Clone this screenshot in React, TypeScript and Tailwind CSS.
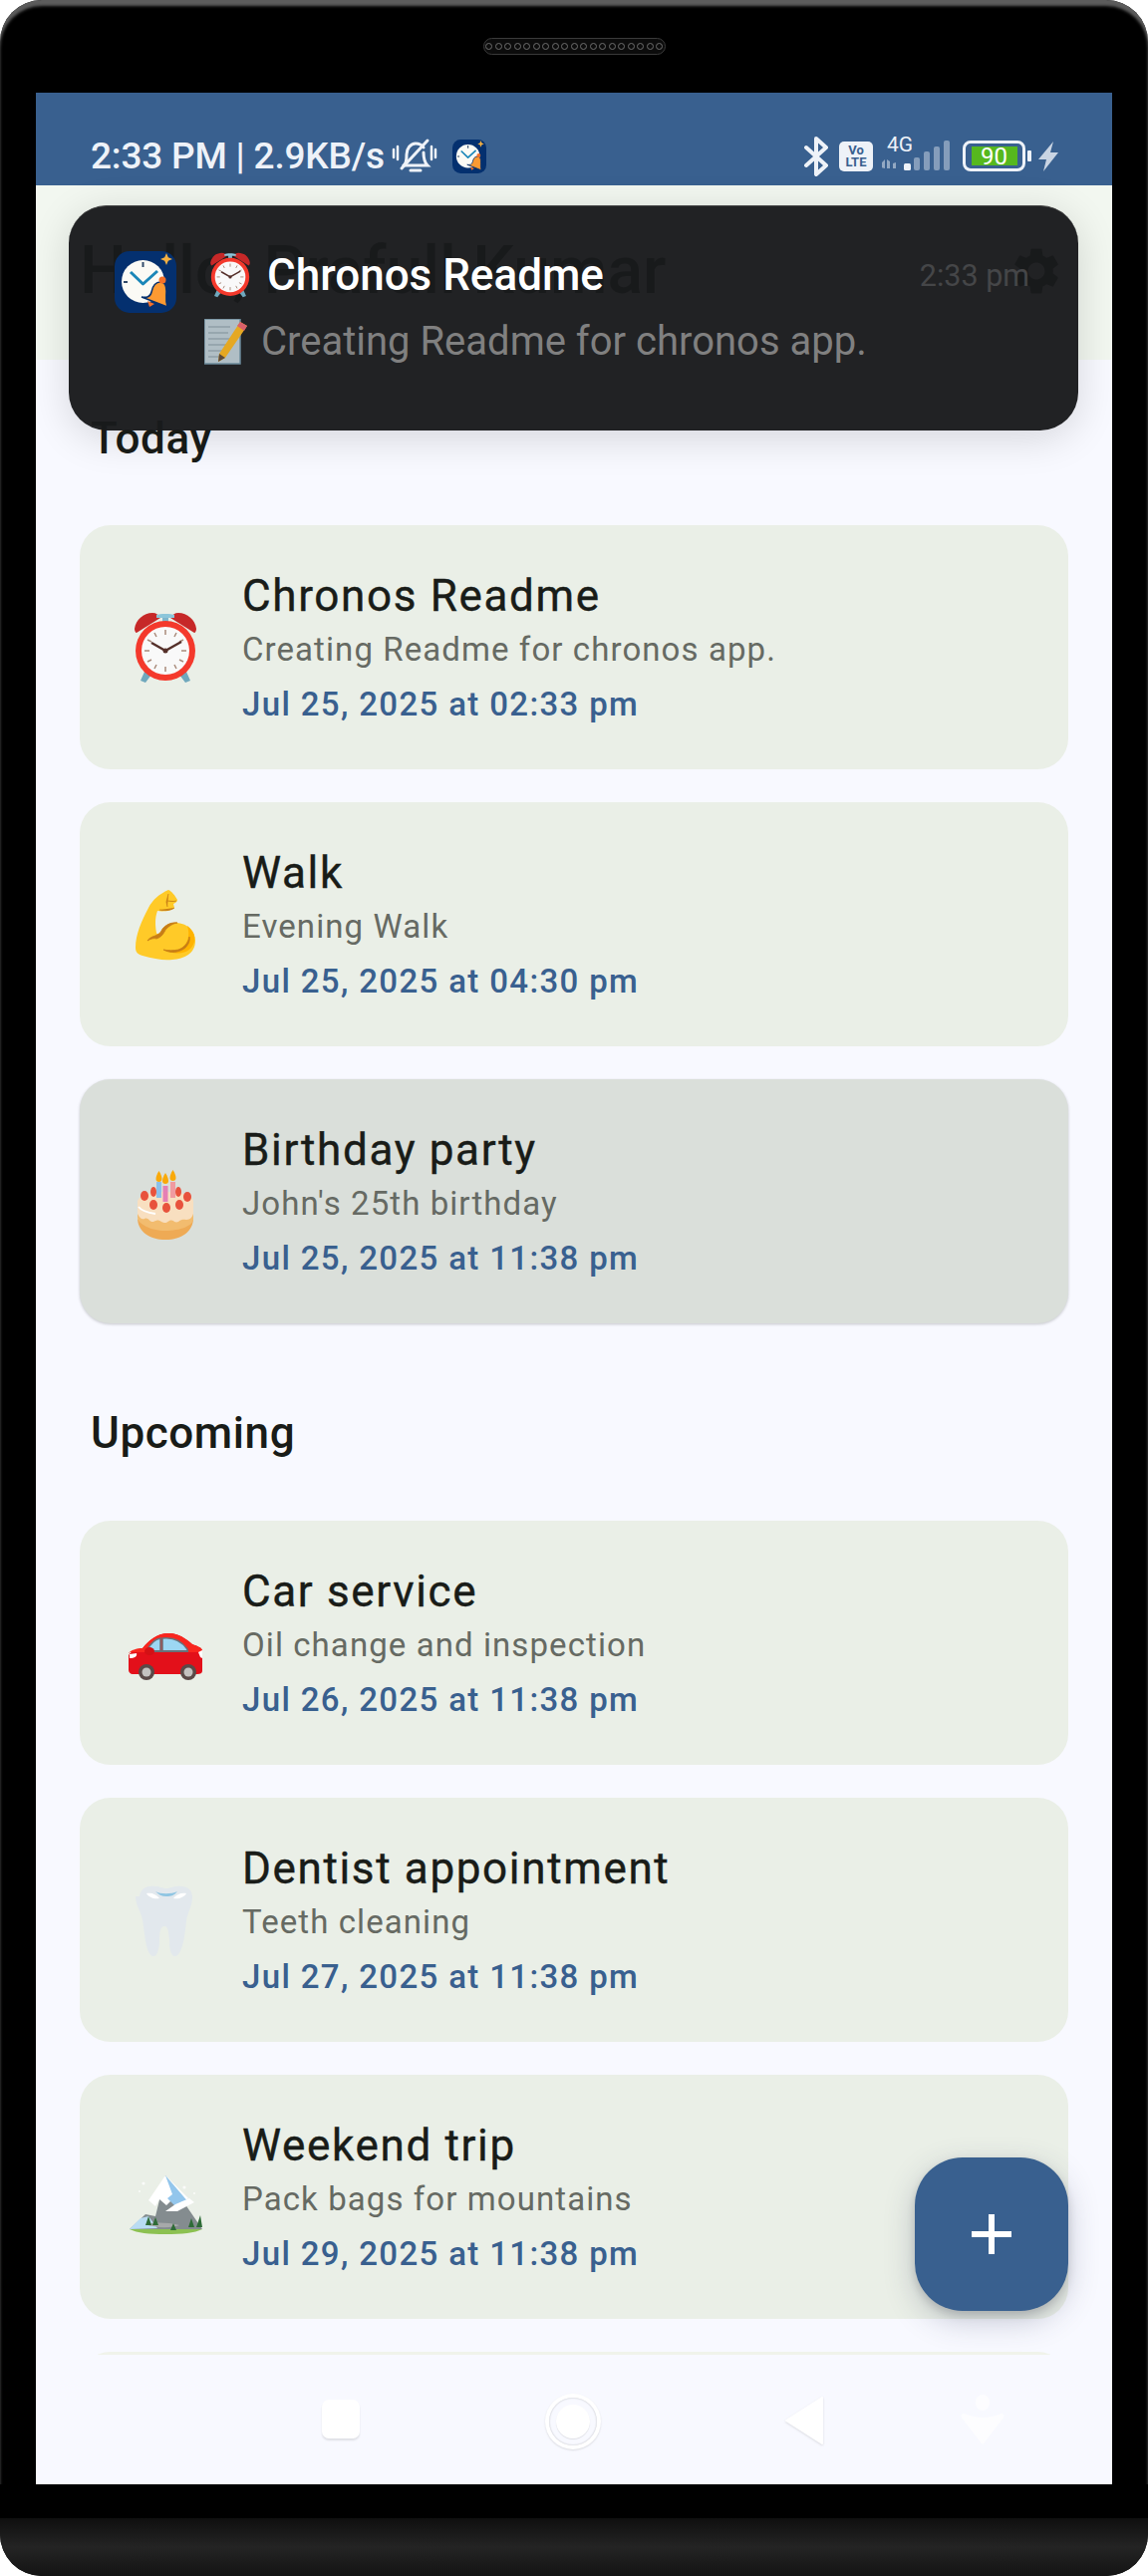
import React from "react";
import { MdSettings } from "react-icons/md";

const AlarmEmoji = ({ s = 72 }: { s?: number }) => (
  <svg width={s} height={s} viewBox="0 0 72 72" className="overflow-visible">
    <path d="M5 17C6 8 14 1 23 1c4 0 6 2 8 5L7 21c-1 0-2-2-2-4Z" fill="#c62828" />
    <path d="M67 17C66 8 58 1 49 1c-4 0-6 2-8 5l24 15c1 0 2-2 2-4Z" fill="#c62828" />
    <path d="M33 5h6v7h-6z" fill="#7fb6cc" />
    <path d="M27 3c3-1.500 15-1.500 18 0v3H27z" fill="#8cc6da" />
    <path d="M15 60l-4 9 5 2 6-8zM57 60l4 9-5 2-6-8z" fill="#6fa8bd" />
    <circle cx="36" cy="39" r="30" fill="#f4392c" />
    <circle cx="36" cy="39" r="24" fill="#f9f9f9" />
    <g stroke="#a98b7b" strokeWidth="1.500">
      <path d="M36 18v5M36 55v5M15 39h5M52 39h5M25 21l2 4M47 21l-2 4M25 57l2-4M47 57l-2-4M18 28l4 2M54 28l-4 2M18 50l4-2M54 50l-4-2" />
    </g>
    <path d="M22 31l14 8 16-9" fill="none" stroke="#55302a" strokeWidth="2.500" strokeLinejoin="round" />
    <circle cx="36" cy="39" r="2.500" fill="#55302a" />
  </svg>
);

const BicepsEmoji = () => (
  <svg width="72" height="72" viewBox="0 0 72 72" className="overflow-visible">
    <path d="M39 1C30 5 23 11 19 19 12 32 6 46 6 59c0 5 3 7 7 8 11 3 21 5 30 4 12-1 23-6 23-19 0-10-8-17-18-18-8-1-14 4-16 8-1 3-5 4-5 2-1-6-2-14 1-22 6 1 14 0 17-3l-1-4c3-1 4-3 4-4-2-4-6-9-9-10Z" fill="#ffca28" />
    <path d="M58 37c3 9 1 20-9 24-6 2-12 1-15 0 9 5 22 5 28-2 5-6 5-15-4-22Z" fill="#ffb300" />
    <path d="M48 34c-8-1-14 4-16 8-1 3-6 5-9 6-2 1-4 2-5 4 3-2 7-3 9-2 3-1 6-3 8-7 2-4 7-8 13-9ZM34 61c7 4 16 3 22-2 3-3 5-7 4-11-1 6-5 11-11 13-5 1-10 1-15 0ZM37 12c3 0 7 1 10 0M39 5l-2 8 1 5M30 21c5 1 11 1 15-2" fill="#c77d16" stroke="#c77d16" strokeWidth="0.800" />
  </svg>
);

const CakeEmoji = () => (
  <svg width="72" height="72" viewBox="0 0 72 72" className="overflow-visible">
    <path d="M8 52c0 14 12 22 28 22s28-8 28-22z" fill="#eeaa55" />
    <path d="M8 35c2-6 12-9 28-9s26 3 28 9v16c0 7-13 12-28 12S8 58 8 51z" fill="#f8dfc0" />
    <path d="M8 48c2 4 4 6 7 5 4-2 5 4 9 3 4-2 5-2 8 0 4 2 5 1 8-1 4-2 5 3 9 1 4-3 5-2 8-2 4 0 6-3 7-6v5c0 7-13 12-28 12S8 58 8 51z" fill="#f2bc6f" />
    <path d="M9 41c3 4 10 6 17 7" stroke="#fff" strokeWidth="1.800" fill="none" />
    <rect x="27" y="16" width="5" height="16" fill="#8cc0ea" />
    <rect x="33.500" y="20" width="5" height="16" fill="#e57fb5" />
    <rect x="41" y="16" width="5" height="16" fill="#f09aa0" />
    <g fill="#f9a90a">
      <path d="M29.500 5c2 3 3 6 3 8s-1 3-3 3-3-1-3-3 1-5 3-8Z" />
      <path d="M36 7c2 3 3 6 3 8s-1 3-3 3-3-1-3-3 1-5 3-8Z" />
      <path d="M43.500 4c2 3 3 6 3 8s-1 3-3 3-3-1-3-3 1-5 3-8Z" />
    </g>
    <g fill="#e8523c">
      <ellipse cx="15" cy="30" rx="4" ry="5" />
      <ellipse cx="24" cy="26" rx="3" ry="5" />
      <ellipse cx="49" cy="26" rx="3" ry="5" />
      <ellipse cx="58" cy="31" rx="4" ry="5" />
      <ellipse cx="24" cy="39" rx="4" ry="5" />
      <ellipse cx="37" cy="42" rx="4" ry="5" />
      <ellipse cx="50" cy="39" rx="4" ry="5" />
    </g>
  </svg>
);

const CarEmoji = () => (
  <svg width="72" height="72" viewBox="0 0 72 72" className="overflow-visible">
    <path d="M-1 48c2-4 8-5 14-7 6-7 13-15 27-15 9 0 16 5 23 11 5 2 9 3 10 6v21c0 2-2 3-5 3H3c-2 0-4-2-4-4Z" fill="#e3101a" />
    <path d="M-1 46c2-3 8-5 14-5 6-7 13-15 27-15 9 0 16 5 23 11 5 2 9 3 10 6v2H-1Z" fill="#f8261e" />
    <path d="M17 44c3-6 7-12 14-13v13Z" fill="#9cd7f3" stroke="#6a7078" strokeWidth="1.500" />
    <path d="M33 31c9-1 18 1 25 11v2H33Z" fill="#9cd7f3" stroke="#6a7078" strokeWidth="1.500" />
    <path d="M17 44h42" stroke="#6a7078" strokeWidth="2" />
    <ellipse cx="20" cy="44" rx="5" ry="4" fill="#d31115" />
    <path d="M0 47l7-1c1 3-2 5-7 5ZM73 43v8l-2-1-2-5Z" fill="#fff" />
    <circle cx="17" cy="65" r="8" fill="#5a4a48" />
    <circle cx="17" cy="65" r="4.500" fill="#c4c2c0" />
    <circle cx="59" cy="65" r="8" fill="#5a4a48" />
    <circle cx="59" cy="65" r="4.500" fill="#c4c2c0" />
  </svg>
);

const ToothEmoji = () => (
  <svg width="72" height="72" viewBox="0 0 72 72" className="overflow-visible">
    <path d="M10 12C11 3 19 1 26 2c5 0 7 2 11 2s6-2 11-2c8-1 15 2 15 11 0 9-5 15-6 24-1 8-3 34-11 35-5 0-6-8-6-16-1-8-1-14-5-14s-5 6-5 14c0 8-2 16-6 16-8 0-9-26-11-36-1-8-7-15-7-24Z" fill="#e2e8ed" />
    <path d="M26 7c5 3 16 3 22 0-3 4-6 5-11 5s-8-2-11-5Z" fill="#8fc5e2" />
    <path d="M17 9c5-1 10 1 13 5-5 1-11-1-13-5ZM57 9c-5-1-10 1-13 5 5 1 11-1 13-5Z" fill="#fff" />
  </svg>
);

const MountainEmoji = () => (
  <svg width="72" height="72" viewBox="0 0 72 72" className="overflow-visible">
    <path d="M0 68c16-3 55-3 73 0-8 4-20 5-37 5S8 72 0 68Z" fill="#8cc152" />
    <path d="M0 68l16-15 10 2 10-41 37 54Z" fill="#848c8f" />
    <path d="M0 68l11-11 8-2 9 12Z" fill="#b9dcf3" />
    <path d="M36 14 19 39l7 6 4-7 7 6 9-9 6 6 7-4Z" fill="#fff" />
    <path d="M36 14l24 28-7-2-6 6-9-9 5-4Z" fill="#93c6ec" />
    <path d="M48 50l17-9-5-4-14 6-10 7Z" fill="#fff" />
    <path d="M16 63c8-2 22-2 34 1-8 3-24 3-34-1Z" fill="#a7a9aa" />
    <g fill="#2e6b36">
      <path d="M19 55l3 9h-6ZM26 56l3 8h-6ZM44 62l3 7h-6ZM62 57l3 9h-6ZM71 54l2 12h-6Z" />
    </g>
    <g fill="#fff" opacity="0.800">
      <circle cx="14" cy="22" r="1.600" />
      <circle cx="55" cy="26" r="1.600" />
      <circle cx="10" cy="30" r="1" />
      <circle cx="65" cy="32" r="1" />
    </g>
  </svg>
);

const MemoEmoji = () => (
  <svg width="45" height="46" viewBox="0 0 45 46">
    <rect x="0" y="0" width="36" height="45" fill="#b0bec5" stroke="#6b8a9a" strokeWidth="1.500" />
    <g stroke="#7f8f98" strokeWidth="1">
      <path d="M4 8h22M4 14h20M4 20h24M4 26h18M4 32h16M4 38h14" />
    </g>
    <path d="M36 3l7 4-22 32-7 4 1-8Z" fill="#e5a823" />
    <path d="M36 3l7 4-3 5-7-5Z" fill="#d9606a" />
    <path d="M15 35l6 4-7 4Z" fill="#5c4a3a" />
  </svg>
);

const AppIcon = ({ s }: { s: number }) => (
  <svg width={s} height={s} viewBox="0 0 62 62">
    <rect x="0" y="0" width="62" height="62" rx="15" fill="#04306f" />
    <circle cx="28.500" cy="30.500" r="21.500" fill="#fbfaf5" />
    <path d="M16 21l12.500 12L43 20" fill="none" stroke="#1a86b8" strokeWidth="3" strokeLinejoin="round" />
    <path d="M28.500 11v5M9 31h4" stroke="#314a6a" strokeWidth="2" />
    <path d="M46 31c-6 0-8 5-9 10-1 5-5 6-10 5l26 10c-2-6-1-10-1-16 0-6-2-9-6-9Z" fill="#fd9a32" stroke="#04306f" strokeWidth="1.500" />
    <circle cx="48" cy="29" r="3.500" fill="#f3702a" />
    <path d="M33 50l7 3-5 3Z" fill="#f3702a" />
    <path d="M52 2l1.800 4.200L58 8l-4.200 1.800L52 14l-1.800-4.200L46 8l4.200-1.800Z" fill="#f5b041" />
  </svg>
);

const MutedBell = () => (
  <svg width="46" height="38" viewBox="0 0 46 38" fill="none" stroke="#eef2f8" strokeWidth="3" strokeLinecap="round">
    <path d="M12 28c3-2 3-6 3-11 0-6 4-11 9-11 3 0 6 1 8 4" />
    <path d="M32 15c0 5 1 10 4 13H12" />
    <path d="M10 31 36 3" />
    <path d="M19 33h10" />
    <path d="M2 12v8M6 9v13M40 9v13M44 12v8" strokeWidth="2.500" />
  </svg>
);

const Bluetooth = () => (
  <svg width="25" height="40" viewBox="0 0 25 40" fill="none" stroke="#eef2f8" strokeWidth="4" strokeLinejoin="round" strokeLinecap="round">
    <path d="M2 11l20 18-10 9V2l10 9L2 29" />
  </svg>
);

const SignalBars = () => (
  <svg width="68" height="30" viewBox="0 0 68 30" fill="#eef2f8">
    <path d="M0 24l4-4v9l-4-1ZM6 20l3 2v7H6ZM12 24l3-1v6h-3Z" opacity="0.500" transform="translate(-1 -1)" />
    <rect x="22" y="23" width="7" height="7" rx="1.500" />
    <g opacity="0.420">
      <rect x="32" y="17" width="6" height="13" rx="2" />
      <rect x="42" y="11" width="6" height="19" rx="2" />
      <rect x="52" y="6" width="6" height="24" rx="2" />
      <rect x="62" y="0" width="6" height="30" rx="2" />
    </g>
  </svg>
);

const Bolt = () => (
  <svg width="20" height="30" viewBox="0 0 20 30" fill="#eef2f8" opacity="0.800">
    <path d="M15 0 0 18h8L5 30 20 11h-8Z" />
  </svg>
);

type Reminder = { id: string; icon: React.ReactNode; title: string; note: string; when: string; selected?: boolean };

const today: Reminder[] = [
  { id: "readme", icon: <AlarmEmoji />, title: "Chronos Readme", note: "Creating Readme for chronos app.", when: "Jul 25, 2025 at 02:33 pm" },
  { id: "walk", icon: <BicepsEmoji />, title: "Walk", note: "Evening Walk", when: "Jul 25, 2025 at 04:30 pm" },
  { id: "party", icon: <CakeEmoji />, title: "Birthday party", note: "John's 25th birthday", when: "Jul 25, 2025 at 11:38 pm", selected: true },
];

const upcoming: Reminder[] = [
  { id: "car", icon: <CarEmoji />, title: "Car service", note: "Oil change and inspection", when: "Jul 26, 2025 at 11:38 pm" },
  { id: "dentist", icon: <ToothEmoji />, title: "Dentist appointment", note: "Teeth cleaning", when: "Jul 27, 2025 at 11:38 pm" },
  { id: "trip", icon: <MountainEmoji />, title: "Weekend trip", note: "Pack bags for mountains", when: "Jul 29, 2025 at 11:38 pm" },
];

const Card = ({ r }: { r: Reminder }) => (
  <div
    className={
      "flex h-[245px] shrink-0 items-center rounded-[31px] pl-[50px] " +
      (r.selected ? "bg-[#dadfda] shadow-[0_1px_3px_rgba(0,0,0,0.2)]" : "bg-[#eaefe7]")
    }
  >
    <div className="flex h-[72px] w-[72px] shrink-0 items-center justify-center">{r.icon}</div>
    <div className="ml-[41px] flex flex-col">
      <div className="text-[44px] leading-[56px] tracking-[1.65px] font-normal [-webkit-text-stroke:0.4px_#191c18] text-[#191c18]">{r.title}</div>
      <div className="mt-[4px] text-[33px] leading-[44px] tracking-[1.08px] text-[#666a63]">{r.note}</div>
      <div className="mt-[11px] text-[33px] leading-[44px] tracking-[1.35px] font-medium text-[#39608f]">{r.when}</div>
    </div>
  </div>
);

export default function App() {
  return (
    <div className="relative flex h-[2585px] w-[1152px] flex-col overflow-hidden bg-white [font-family:Roboto,'Noto_Sans',sans-serif]">
      <div className="relative flex h-[2585px] flex-col overflow-hidden rounded-[42px] bg-black shadow-[inset_0_6px_3px_#5c5c5c]">
        <div className="flex h-[93px] shrink-0 justify-center pt-[38px]">
          <div className="flex h-[17px] w-[183px] items-center justify-center gap-[2.500px] rounded-full border border-[#3a3a3a] bg-[#0c0c0c]">
            {Array.from({ length: 19 }).map((_, i) => (
              <span key={i} className="h-[7px] w-[7px] rounded-full border border-[#6e6e6e]" />
            ))}
          </div>
        </div>
        <div className="relative mx-[36px] flex h-[2400px] shrink-0 flex-col overflow-hidden bg-[#f8f9ff]">
          <div className="flex h-[93px] shrink-0 items-center justify-between bg-[#39608f] pl-[55px] pr-[54px] pt-[34px] text-[#eef2f8]">
            <div className="flex items-center">
              <span className="text-[37px] leading-[44px] font-medium tracking-[-0.2px]">2:33 PM | 2.9KB/s</span>
              <span className="ml-[7px]"><MutedBell /></span>
              <span className="ml-[15px]"><AppIcon s={34} /></span>
            </div>
            <div className="flex items-center">
              <Bluetooth />
              <div className="ml-[10px] flex h-[30px] w-[34px] flex-col items-center justify-center rounded-[5px] bg-[#eef2f8] text-[13px] leading-[12px] font-bold text-[#39608f]">
                <span>Vo</span>
                <span>LTE</span>
              </div>
              <div className="relative ml-[9px] h-[32px] w-[68px]">
                <SignalBars />
                <span className="absolute left-[5px] top-[-6px] text-[21px] leading-[20px]">4G</span>
              </div>
              <div className="ml-[13px] flex h-[31px] w-[63px] items-center justify-center rounded-[8px] border-[3px] border-[#eef2f8]">
                <div className="flex h-[19px] w-[46px] items-center justify-center bg-[#56b81e] text-[24px] leading-[24px] text-white">90</div>
              </div>
              <div className="ml-[2px] h-[11px] w-[4px] rounded-[1px] bg-[#eef2f8]" />
              <span className="ml-[7px]"><Bolt /></span>
            </div>
          </div>
          <div className="flex h-[175px] shrink-0 items-start justify-between bg-[#f2f7f0] pl-[44px] pr-[48px] pt-[50px]">
            <h1 className="text-[66px] leading-[72px] font-medium text-[#191c18]">Hello, Prafull Kumar</h1>
            <MdSettings className="mt-[8px] text-[#191c18]" size={56} />
          </div>
          <div className="flex min-h-0 flex-1 flex-col overflow-hidden px-[44px]">
            <h2 className="ml-[11px] mt-[54px] h-[112px] shrink-0 text-[44px] leading-[50px] font-medium tracking-[0.6px] text-[#191c18]">Today</h2>
            <div className="flex flex-col gap-[33px]">
              {today.map((r) => (
                <Card key={r.id} r={r} />
              ))}
            </div>
            <h2 className="ml-[11px] mt-[85px] h-[113px] shrink-0 text-[44px] leading-[50px] font-medium tracking-[0.6px] text-[#191c18]">Upcoming</h2>
            <div className="flex flex-col gap-[33px]">
              {upcoming.map((r) => (
                <Card key={r.id} r={r} />
              ))}
              <div className="h-[245px] shrink-0 rounded-[31px] bg-[#f0f3ea]" />
            </div>
          </div>
          <div className="flex h-[130px] shrink-0 items-start bg-[#f8f9ff] pt-[45px]">
            <div className="ml-[287px] h-[39px] w-[38px] rounded-[7px] bg-white shadow-[0_2px_2px_rgba(0,0,0,0.1)]" />
            <div className="ml-[186px] mt-[-6px] flex h-[56px] w-[56px] items-center justify-center rounded-full bg-white shadow-[0_1px_2px_rgba(0,0,0,0.12)]">
              <div className="flex h-[48px] w-[48px] items-center justify-center rounded-full bg-[#f8f9ff] shadow-[inset_0_0_2px_rgba(0,0,0,0.25)]">
                <div className="h-[34px] w-[34px] rounded-full bg-white shadow-[0_1px_1px_rgba(0,0,0,0.1)]" />
              </div>
            </div>
            <svg width="38" height="48" viewBox="0 0 38 48" className="ml-[185px] mt-[-3px] overflow-visible [filter:drop-shadow(0_1px_1px_rgba(0,0,0,0.12))]">
              <path d="M37 1v46L1 24Z" fill="#fff" stroke="#fff" strokeWidth="2" strokeLinejoin="round" />
            </svg>
            <svg width="44" height="50" viewBox="0 0 44 50" className="ml-[138px] mt-[-5px]">
              <ellipse cx="22" cy="8" rx="7" ry="8" fill="#fdfdff" />
              <path d="M3 19c6 2 12 4 19 4s13-2 19-4c2 0 3 2 2 4L24 48c-1 2-3 2-4 0L1 23c-1-2 0-4 2-4Z" fill="#fdfdff" />
            </svg>
          </div>
          <button className="absolute left-[882px] top-[2072px] flex h-[154px] w-[154px] items-center justify-center rounded-[48px] bg-[#39608f] shadow-[0_10px_30px_rgba(50,60,90,0.25),0_4px_8px_rgba(0,0,0,0.15)]">
            <svg width="40" height="40" viewBox="0 0 40 40"><path d="M17 0h6v17h17v6H23v17h-6V23H0v-6h17Z" fill="#fff" /></svg>
          </button>
          <div className="absolute left-[33px] top-[113px] h-[226px] w-[1013px] rounded-[38px] border-t border-[#4a4a4a] bg-[#191a1c]/[0.965] shadow-[0_8px_40px_rgba(0,0,0,0.14)]">
            <div className="absolute left-[46px] top-[45px]"><AppIcon s={62} /></div>
            <div className="absolute left-[139px] top-[45px] flex items-center">
              <AlarmEmoji s={46} />
              <span className="ml-[14px] text-[44px] leading-[48px] font-medium text-white">Chronos Readme</span>
            </div>
            <div className="absolute left-[136px] top-[113px] flex items-center">
              <MemoEmoji />
              <span className="ml-[12px] text-[40px] leading-[46px] text-[#808080]">Creating Readme for chronos app.</span>
            </div>
            <span className="absolute right-[49px] top-[50px] text-[30.500px] leading-[40px] text-[#454648]">2:33 pm</span>
          </div>
        </div>
        <div className="h-[34px] shrink-0 bg-black" />
        <div className="h-[58px] shrink-0 bg-gradient-to-b from-[#0f0f0f] via-[#242424] to-[#141414]" />
      </div>
    </div>
  );
}
